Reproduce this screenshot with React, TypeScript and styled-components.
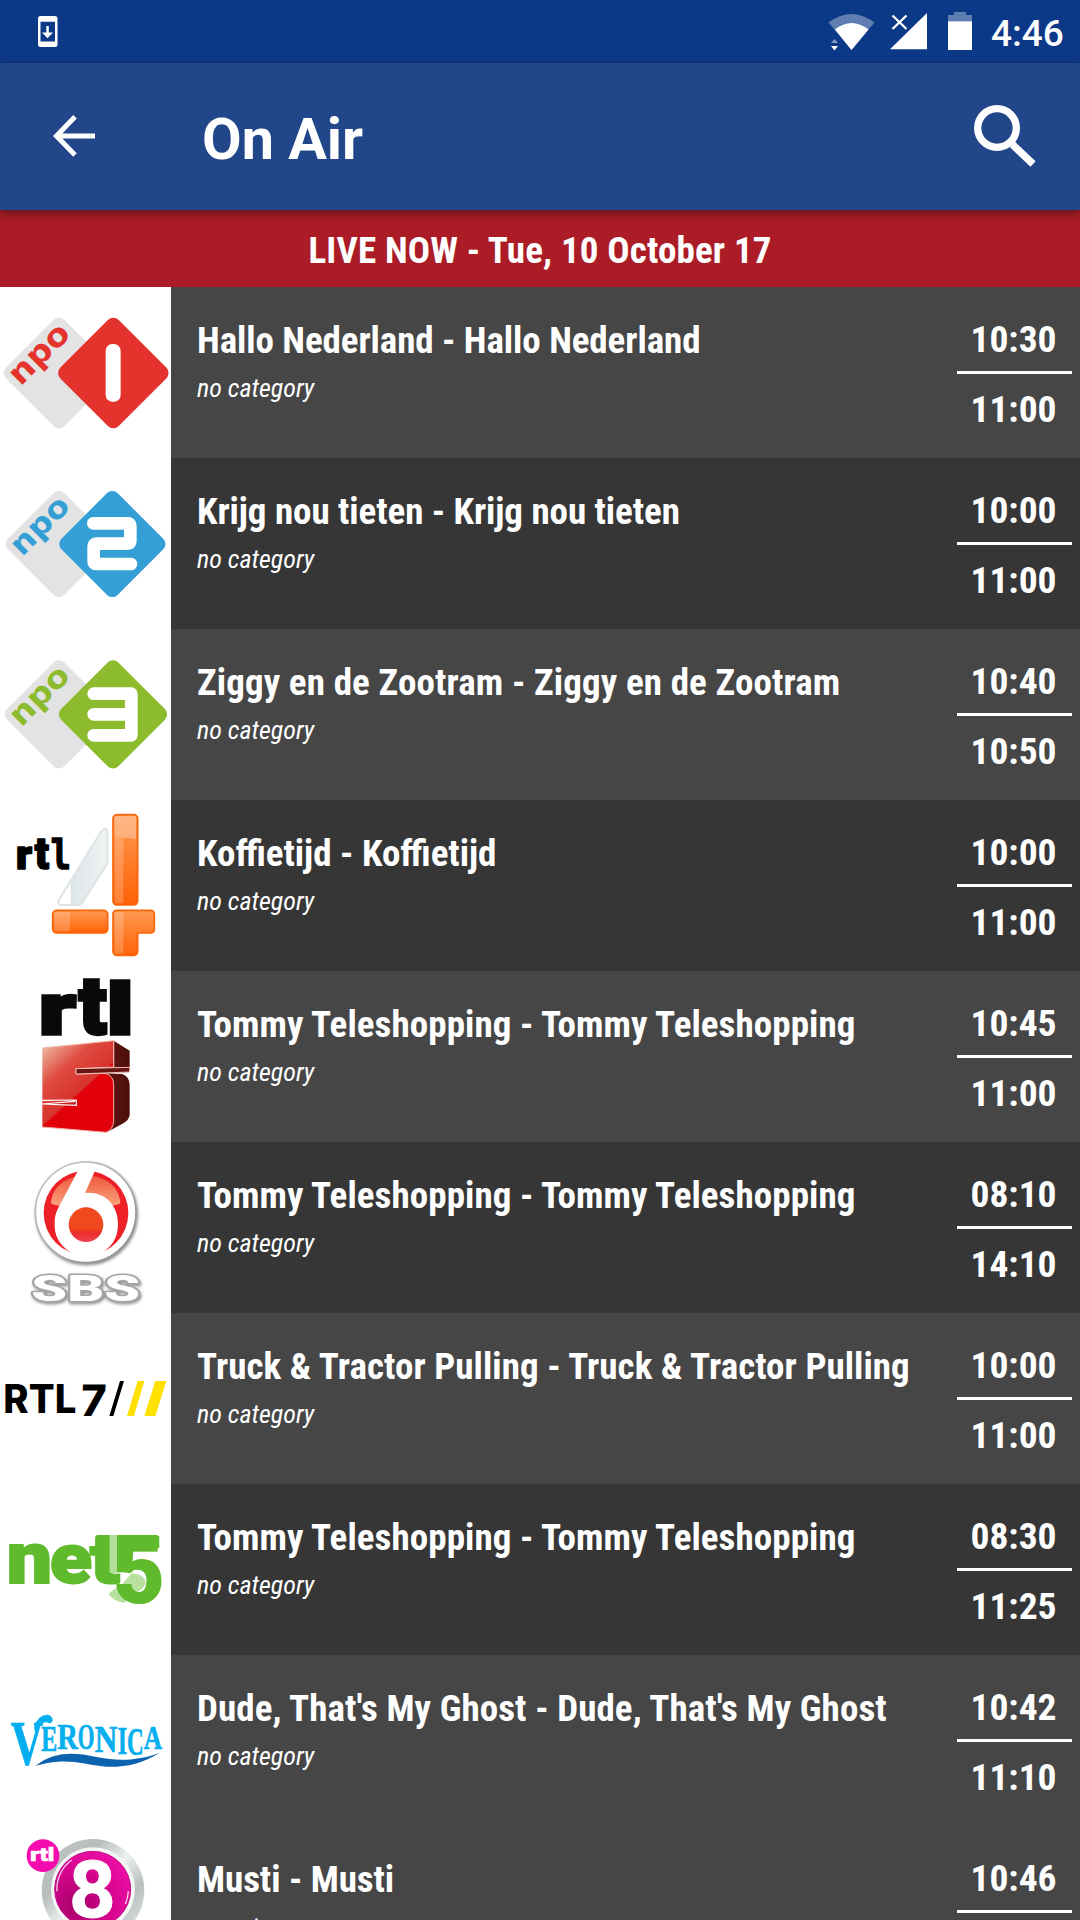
import React from "react";
import styled, { createGlobalStyle } from "styled-components";

const GlobalStyle = createGlobalStyle`
  * {
    box-sizing: border-box;
  }

  body {
    margin: 0;
    background: #464646;
    overflow: hidden;
  }
`;

const Screen = styled.div`
  width: 1080px;
  height: 1920px;
  overflow: hidden;
  display: flex;
  flex-direction: column;
  color: #fff;
  font-family: "Roboto", sans-serif;
`;

const StatusBar = styled.div`
  flex: none;
  height: 63px;
  padding: 0 17px 0 38px;
  display: flex;
  justify-content: space-between;
  background: #0b3887;
`;

const StatusGroup = styled.div`
  display: flex;
  align-items: center;
`;

const Clock = styled.span`
  width: 72px;
  margin-left: 19px;
  padding-top: 3px;
  font-size: 37px;
  font-weight: 500;
  white-space: nowrap;
`;

const Toolbar = styled.header`
  flex: none;
  height: 147px;
  padding: 0 44px 0 53px;
  display: flex;
  align-items: center;
  background: #22468a;
  box-shadow: 0 3px 9px rgba(0, 0, 0, 0.45);
  z-index: 1;

  svg {
    margin-bottom: 2px;
  }
`;

const ToolbarTitle = styled.h1`
  flex: 1;
  margin: 0 0 0 106px;
  padding-top: 6px;
  font-size: 57.5px;
  font-weight: 700;
`;

const Banner = styled.div`
  flex: none;
  height: 77px;
  line-height: 81px;
  text-align: center;
  background: #ab1c26;
  font-family: "Roboto Condensed", "Roboto", sans-serif;
  font-size: 37px;
  font-weight: 700;
  letter-spacing: 0.15px;
`;

const Row = styled.div<{ $dark?: boolean }>`
  flex: none;
  height: 171px;
  display: flex;
  background: ${(p) => (p.$dark ? "#363636" : "#464646")};
  font-family: "Roboto Condensed", "Roboto", sans-serif;
`;

const LogoCell = styled.div`
  flex: none;
  width: 171px;
  height: 171px;
  background: #fff;

  svg {
    display: block;
  }
`;

const Info = styled.div`
  flex: 1;
  padding: 32px 0 0 26px;
  white-space: nowrap;
`;

const ShowTitle = styled.div<{ $tracking?: number }>`
  font-size: 37px;
  font-weight: 700;
  line-height: 44px;
  letter-spacing: ${(p) => p.$tracking ?? 0}px;
`;

const Category = styled.div`
  margin-top: 10px;
  font-size: 26px;
  font-style: italic;
  line-height: 30px;
`;

const Times = styled.div`
  flex: none;
  width: 115px;
  margin-right: 8px;
  padding-top: 30px;
  text-align: center;
  font-size: 37.5px;
  font-weight: 700;
  line-height: 44px;
`;

const Time = styled.div`
  padding-right: 2px;
`;

const Divider = styled.div`
  height: 3px;
  margin: 10px 0 13px;
  background: #fff;
`;

const heavy = "Roboto, sans-serif";

const Logo = ({ top, children }: { top: number; children: React.ReactNode }) => (
  <svg width="171" height="171" viewBox={`0 ${top} 513 513`}>
    {children}
  </svg>
);

const Word = ({
  children,
  width,
  ...rest
}: React.SVGProps<SVGTextElement> & { width?: number }) => (
  <text
    fontFamily={heavy}
    fontWeight="900"
    textLength={width}
    lengthAdjust="spacingAndGlyphs"
    {...rest}
  >
    {children}
  </text>
);

const NpoBase = ({ color, cx, cy, size }: { color: string; cx: number; cy: number; size: number }) => (
  <>
    <rect x="-118" y="-118" width="236" height="236" rx="22" fill="#e3e3e4" transform={`translate(177 ${cy}) rotate(45) scale(${size})`} />
    <rect x="-118" y="-118" width="236" height="236" rx="22" fill={color} transform={`translate(${cx} ${cy}) rotate(45) scale(${size})`} />
    <g transform={`translate(177 ${cy}) scale(${size}) translate(-177 -264)`}>
      <Word
        transform="translate(67 303) rotate(-45)"
        fontFamily="DejaVu Sans"
        fontWeight="700"
        fontSize="90"
        fill={color}
        width={208}
      >
        npo
      </Word>
    </g>
  </>
);

const Npo1 = () => (
  <Logo top={6}>
    <NpoBase color="#e4322c" cx={340} cy={264} size={1.05} />
    <rect x="317" y="177" width="45" height="173" rx="20" fill="#fff" />
  </Logo>
);

const Npo2 = () => (
  <Logo top={3}>
    <NpoBase color="#349fd5" cx={337} cy={261} size={1.01} />
    <path d="M280 199H384Q391 199 391 206V252Q391 260 384 260H288Q281 260 281 268V313Q281 321 288 321H393" fill="none" stroke="#fff" strokeWidth="38" strokeLinecap="round" strokeLinejoin="round" />
  </Logo>
);

const Npo3 = () => (
  <Logo top={516}>
    <NpoBase color="#8cbc2d" cx={339} cy={772} size={1.03} />
    <path d="M281 710H394V835H281M281 772H394" fill="none" stroke="#fff" strokeWidth="38" strokeLinecap="round" strokeLinejoin="round" />
  </Logo>
);

const Rtl4 = () => (
  <Logo top={0}>
    <defs>
      <linearGradient id="orange" x1="0" y1="0" x2="0" y2="1">
        <stop offset="0" stopColor="#ff9a52" />
        <stop offset="1" stopColor="#ff6205" />
      </linearGradient>
      <linearGradient id="glass" x1="0" y1="0" x2="1" y2="0">
        <stop offset="0" stopColor="#fff" />
        <stop offset=".25" stopColor="#fff" />
        <stop offset=".26" stopColor="#dde5e7" />
        <stop offset="1" stopColor="#eef3f3" />
      </linearGradient>
    </defs>
    <g stroke="#000" strokeWidth="5" strokeLinejoin="round">
      <Word x="48" y="206" fontSize="124" width={48}>r</Word>
      <Word x="104" y="206" fontSize="132" width={43}>t</Word>
      <Word x="152" y="206" fontFamily="DejaVu Sans Mono" fontWeight="700" fontSize="124" width={60}>l</Word>
    </g>
    <path d="M304 94Q319 78 322 96V190L251 302Q243 315 232 315H184Q168 314 178 298Z" fill="url(#glass)" stroke="#dde3e5" strokeWidth="6" />
    <g fill="url(#orange)" stroke="#fb6509" strokeWidth="5">
      <rect x="339" y="44" width="74" height="271" rx="12" />
      <rect x="158" y="331" width="165" height="68" rx="12" />
      <path d="M351 331H451Q463 331 463 343V387Q463 399 451 399H413V453Q413 466 401 466H351Q339 466 339 453V343Q339 331 351 331Z" />
    </g>
    <path d="M344 54Q344 48 351 48H401Q408 48 408 55V118Q376 111 344 113Z" fill="#fff" opacity=".3" />
    <path d="M344 113H370V310H352Q344 310 344 303ZM163 336H210V394H163ZM344 336H370V461H344Z" fill="#fff" opacity=".2" />
  </Logo>
);

const Rtl5 = () => (
  <Logo top={513}>
    <defs>
      <linearGradient id="face" x1="0" y1="0" x2=".7" y2="1">
        <stop offset="0" stopColor="#efc9b0" />
        <stop offset=".35" stopColor="#df4b40" />
        <stop offset=".62" stopColor="#d6322c" />
        <stop offset=".63" stopColor="#e2000b" />
      </linearGradient>
      <linearGradient id="side" x1="0" y1="0" x2="1" y2="0">
        <stop offset="0" stopColor="#891515" />
        <stop offset="1" stopColor="#4a100c" />
      </linearGradient>
    </defs>
    <g fill="#08090b" stroke="#08090b" strokeWidth="10">
      <Word x="117" y="702" fontSize="215" width={110}>r</Word>
      <Word x="236" y="702" fontSize="242" width={84}>t</Word>
      <Word x="320" y="702" fontSize="212" width={80}>l</Word>
    </g>
    <path d="M341 722L389 752V816L228 823V806L341 801ZM315 820L367 822Q389 830 389 855V945Q387 960 370 970L318 998Z" fill="url(#side)" />
    <path d="M127 744L341 722V801L228 806V822L315 820Q341 826 341 855V965Q338 990 318 997L127 981Z" fill="url(#face)" />
    <path d="M127 744L341 722V801L228 806V822L315 820Q341 826 341 855V965Q338 990 318 997L127 981" fill="none" stroke="#f0b5a6" strokeWidth="3" />
    <path d="M127 901L229 900V916L127 912L225 904" fill="#c81a1c" stroke="#fff" strokeWidth="3.5" />
    <path d="M228 806L389 802V816L228 822Z" fill="#671412" stroke="#f3c1b5" strokeWidth="3" />
    <path d="M341 722V801" stroke="#f0b5a6" strokeWidth="3" />
  </Logo>
);

const Sbs6 = () => (
  <Logo top={6}>
    <defs>
      <linearGradient id="rim" x1="0" y1="0" x2="1" y2="1">
        <stop offset="0" stopColor="#c9c9c9" />
        <stop offset="1" stopColor="#8b8b8b" />
      </linearGradient>
      <linearGradient id="gloss" x1="0" y1="0" x2="0" y2="1">
        <stop offset="0" stopColor="#ed5840" />
        <stop offset="1" stopColor="#fba67c" />
      </linearGradient>
      <linearGradient id="core" x1="0" y1="0" x2="0" y2="1">
        <stop offset=".6" stopColor="#f0481f" />
        <stop offset=".75" stopColor="#e92e2c" />
        <stop offset="1" stopColor="#f04455" />
      </linearGradient>
      <filter id="soft" x="-20%" y="-20%" width="140%" height="140%">
        <feDropShadow dx="3" dy="5" stdDeviation="4" floodColor="#555" floodOpacity=".7" />
      </filter>
    </defs>
    <circle cx="257" cy="217" r="151" fill="#fff" stroke="url(#rim)" strokeWidth="5" filter="url(#soft)" />
    <circle cx="258" cy="219" r="127" fill="#ed2028" />
    <path d="M153 190C155 140 200 108 257 106C315 108 359 140 361 190C345 206 170 206 153 190Z" fill="url(#gloss)" />
    <path d="M236 88H287L255 159C315 153 354 196 354 252C354 295 335 320 305 338L290 352H225L213 338C175 312 162 285 164 245C165 222 172 208 180 194Z" fill="#fff" />
    <circle cx="258" cy="254" r="52" fill="url(#core)" />
    <g filter="url(#soft)">
      <Word x="94" y="482" fontSize="110" fill="#fff" stroke="#a5a5a5" strokeWidth="9" strokeLinejoin="round" style={{ paintOrder: "stroke" }} width={326}>
        SBS
      </Word>
    </g>
  </Logo>
);

const Rtl7 = () => (
  <Logo top={519}>
    <Word x="10" y="820" fontFamily="Inter" fontWeight="800" fontSize="117" width={219}>
      RTL
    </Word>
    <Word transform="translate(240 828) skewX(-3)" fontFamily="Inter" fontWeight="800" fontSize="130" width={76}>
      7
    </Word>
    <path d="M328 828L360 723H372L340 828Z" />
    <path d="M381 828L413 723H433L402 828ZM433 828L466 723H499L466 828Z" fill="#ffe000" />
  </Logo>
);

const Net5 = () => (
  <Logo top={0}>
    <g fill="#5fbb2c" stroke="#5fbb2c" strokeWidth="6">
      <Word x="20" y="297" fontSize="217" width={136}>n</Word>
      <Word x="150" y="297" fontSize="213" width={126}>e</Word>
      <Word x="270" y="297" fontSize="205" width={90}>t</Word>
    </g>
    <path d="M325 330Q350 308 362 305L395 268Q437 272 437 300Q425 325 385 330L375 357Q340 352 325 330Z" fill="#b8e19f" />
    <Word x="338" y="356" fontSize="285" fill="#5fbb2c" width={158}>5</Word>
    <rect x="290" y="153" width="183" height="50" fill="#5fbb2c" />
    <rect x="290" y="153" width="107" height="112" fill="#5fbb2c" />
    <rect x="329" y="153" width="22" height="114" fill="#b4df9b" />
  </Logo>
);

const Veronica = () => (
  <Logo top={513}>
    <g fill="#05aeee" stroke="#05aeee" strokeWidth="2">
      <Word x="32" y="844" fontFamily="Liberation Serif" fontWeight="700" fontSize="188" width={98}>V</Word>
      <path d="M103 730Q112 695 142 693Q158 696 157 711Q152 721 141 714Q130 711 118 724L108 752Z" />
      {[
        ["E", 124, 802, 109, 48],
        ["R", 172, 796, 110, 62],
        ["O", 233, 795, 108, 50],
        ["N", 284, 803, 115, 68],
        ["I", 353, 811, 121, 28],
        ["C", 381, 812, 121, 50],
        ["A", 431, 794, 104, 55],
      ].map(([letter, x, y, size, width]) => (
        <Word key={letter} x={x} y={y} fontFamily="Liberation Serif" fontWeight="700" fontSize={size} width={Number(width)}>
          {letter}
        </Word>
      ))}
    </g>
    <path d="M106 846C170 796 235 808 294 820C355 832 415 830 480 806C425 840 375 850 318 848C245 841 200 818 106 846Z" fill="#0b62ae" />
  </Logo>
);

const Rtl8 = () => (
  <Logo top={1026}>
    <defs>
      <linearGradient id="chrome" x1="0" y1="0" x2="1" y2="1">
        <stop offset="0" stopColor="#c3c9c9" />
        <stop offset=".3" stopColor="#b7bdbd" />
        <stop offset=".5" stopColor="#eef1f1" />
        <stop offset=".7" stopColor="#b9c0c0" />
        <stop offset="1" stopColor="#e8ebeb" />
      </linearGradient>
      <radialGradient id="pink" cx=".3" cy=".7" r=".8">
        <stop offset="0" stopColor="#a50069" />
        <stop offset=".6" stopColor="#d9058f" />
        <stop offset="1" stopColor="#ee10a8" />
      </radialGradient>
    </defs>
    <circle cx="279" cy="1219" r="154" fill="url(#chrome)" />
    <circle cx="279" cy="1216" r="126" fill="#f5f7f7" />
    <circle cx="278" cy="1216" r="114" fill="url(#pink)" stroke="#c20b83" strokeWidth="3" />
    <path d="M171 1222A107 107 0 0 1 215 1128M385 1222A107 107 0 0 1 376 1260" fill="none" stroke="#fff" strokeWidth="4" opacity=".8" />
    <Word x="207" y="1299" fontWeight="700" fontSize="240" fill="#fff" stroke="#fff" strokeWidth="3" width={140}>8</Word>
    <circle cx="129" cy="1115" r="49" fill="#f50cae" />
    <Word x="91" y="1130" fontSize="54" fill="#fff" stroke="#fff" strokeWidth="2" width={72}>rtl</Word>
  </Logo>
);

const shows = [
  { logo: Npo1, title: "Hallo Nederland - Hallo Nederland", tracking: -0.07, start: "10:30", end: "11:00" },
  { logo: Npo2, title: "Krijg nou tieten - Krijg nou tieten", tracking: -0.06, start: "10:00", end: "11:00", dark: true },
  { logo: Npo3, title: "Ziggy en de Zootram - Ziggy en de Zootram", tracking: 0.11, start: "10:40", end: "10:50" },
  { logo: Rtl4, title: "Koffietijd - Koffietijd", start: "10:00", end: "11:00", dark: true },
  { logo: Rtl5, title: "Tommy Teleshopping - Tommy Teleshopping", tracking: 0.08, start: "10:45", end: "11:00" },
  { logo: Sbs6, title: "Tommy Teleshopping - Tommy Teleshopping", tracking: 0.08, start: "08:10", end: "14:10", dark: true },
  { logo: Rtl7, title: "Truck & Tractor Pulling - Truck & Tractor Pulling", tracking: 0.05, start: "10:00", end: "11:00" },
  { logo: Net5, title: "Tommy Teleshopping - Tommy Teleshopping", tracking: 0.08, start: "08:30", end: "11:25", dark: true },
  { logo: Veronica, title: "Dude, That's My Ghost - Dude, That's My Ghost", tracking: 0.08, start: "10:42", end: "11:10" },
  { logo: Rtl8, title: "Musti - Musti", tracking: -0.06, start: "10:46", end: "11:00" },
];

const UpdateIcon = () => (
  <svg width="20" height="63" viewBox="38 0 20 63">
    <path fillRule="evenodd" d="M40.5 16H55Q57.5 16 57.5 18.5V44.5Q57.5 47 55 47H40.5Q38 47 38 44.5V18.5Q38 16 40.5 16ZM40.5 21.7V41.5H55V21.7Z" fill="#fff" />
    <path d="M46.3 26H48.8V32.5H53L47.5 38.3L42 32.5H46.3Z" fill="#fff" />
  </svg>
);

const SignalIcons = () => (
  <svg width="144" height="63" viewBox="828 0 144 63" fill="#fff">
    <path d="M828.5 22.5Q851.5 5.5 874.5 22.5L851.5 50Z" opacity=".35" />
    <path d="M835 29.5Q851.5 16.5 868.5 29.5L851.5 50Z" />
    <path d="M831 43L834.5 39L838 43Z" opacity=".5" />
    <path d="M831 46H838L834.5 50.5Z" />
    <path d="M890 49.3H927V13Z" />
    <path d="M892.5 15.5L906.5 29M906.5 15.5L892.5 29" stroke="#fff" strokeWidth="2.3" />
    <path d="M954 12H966V15H972V21.5H948V15H954Z" opacity=".35" />
    <rect x="948" y="21.3" width="24" height="28.7" />
  </svg>
);

const BackIcon = () => (
  <svg width="43" height="42" viewBox="0 0 43 42">
    <path d="M22 1.8L3.5 21L22 40M3.5 21H42" fill="none" stroke="#fff" strokeWidth="5" />
  </svg>
);

const SearchIcon = () => (
  <svg width="62" height="62" viewBox="974 104 62 62" fill="none" stroke="#fff">
    <circle cx="997" cy="127" r="19.3" strokeWidth="7.3" />
    <path d="M1012.5 143.5L1033 163" strokeWidth="7.5" />
  </svg>
);

const App = () => {
  return (
    <Screen>
      <GlobalStyle />
      <StatusBar>
        <StatusGroup>
          <UpdateIcon />
        </StatusGroup>
        <StatusGroup>
          <SignalIcons />
          <Clock>4:46</Clock>
        </StatusGroup>
      </StatusBar>
      <Toolbar>
        <BackIcon />
        <ToolbarTitle>On Air</ToolbarTitle>
        <SearchIcon />
      </Toolbar>
      <Banner>LIVE NOW - Tue, 10 October 17</Banner>
      {shows.map(({ logo: ShowLogo, title, tracking, start, end, dark }, i) => (
        <Row key={i} $dark={dark}>
          <LogoCell>
            <ShowLogo />
          </LogoCell>
          <Info>
            <ShowTitle $tracking={tracking}>{title}</ShowTitle>
            <Category>no category</Category>
          </Info>
          <Times>
            <Time>{start}</Time>
            <Divider />
            <Time>{end}</Time>
          </Times>
        </Row>
      ))}
    </Screen>
  );
};

export default App;
